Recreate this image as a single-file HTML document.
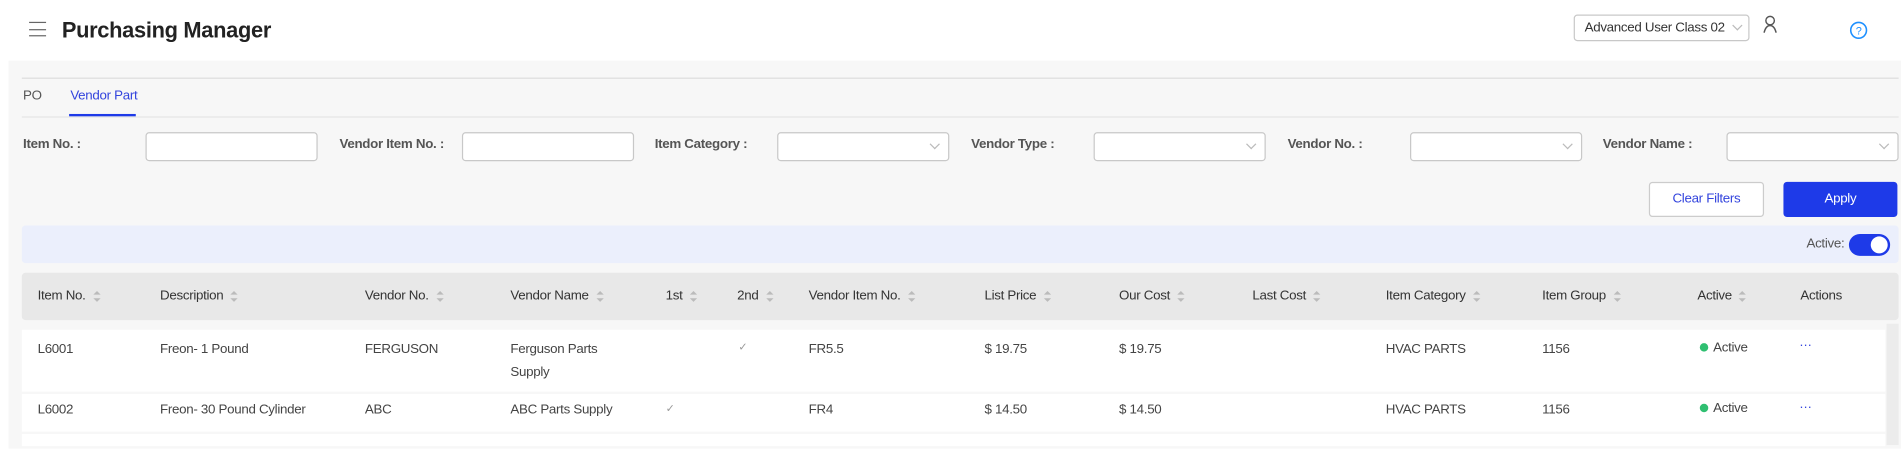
<!DOCTYPE html>
<html><head><style>
*{box-sizing:border-box;margin:0;padding:0}
html,body{width:1901px;height:442px;overflow:hidden;background:#fff}
#w{position:absolute;left:0;top:0;width:1568px;height:365px;transform:scale(1.2124);transform-origin:0 0;font-family:"Liberation Sans",sans-serif;font-size:11px;color:#333;letter-spacing:-0.25px}
.a{position:absolute}
.panel{left:7px;top:50px;width:1561px;height:320px;background:#f7f7f7}
.lbl{font-weight:bold;color:#555;font-size:11px}
.inp{height:24px;background:#fff;border:1px solid #c8c8c8;border-radius:3px}
.chev{position:absolute;right:8px;top:6px;width:6px;height:6px;border-right:1px solid #bbb;border-bottom:1px solid #bbb;transform:rotate(45deg)}
.th{top:238px;color:#333}
.s{display:inline-block;margin-left:6px;vertical-align:middle;width:6px;height:9px;position:relative}
.s:before,.s:after{content:"";position:absolute;left:0;border-left:3px solid transparent;border-right:3px solid transparent}
.s:before{top:0;border-bottom:3px solid #bbb}
.s:after{bottom:0;border-top:3px solid #bbb}
.row{left:18px;width:1537px;background:#fff}
.c{color:#444}
.ck{color:#999;font-size:9px}
.dot{display:inline-block;width:7px;height:7px;border-radius:50%;background:#2fbf71;margin-right:4px}
</style></head><body><div id="w">
<div class="a" style="left:24px;top:18px;width:14px;height:12px;border-top:1.5px solid #666;border-bottom:1.5px solid #666"></div>
<div class="a" style="left:24px;top:23.5px;width:14px;height:1.5px;background:#666"></div>
<div class="a" style="left:51px;top:15px;font-size:18px;font-weight:bold;color:#222">Purchasing Manager</div>
<div class="a inp" style="left:1298px;top:12px;width:145px;height:22px;border-radius:3px"><span class="a" style="left:8px;top:4px;color:#333">Advanced User Class 02</span><span class="chev" style="top:5px;right:6px"></span></div>
<svg class="a" style="left:1452px;top:12px" width="16" height="16" viewBox="0 0 16 16"><circle cx="8" cy="5" r="3.5" fill="none" stroke="#555" stroke-width="1.2"/><path d="M3 15c1-4 2.5-6 5-6s4 2 5 6" fill="none" stroke="#555" stroke-width="1.2"/></svg>
<svg class="a" style="left:1525px;top:17px" width="16" height="16" viewBox="0 0 16 16"><circle cx="8" cy="8" r="6.5" fill="none" stroke="#1e90ff" stroke-width="1.3"/><text x="8" y="11.5" font-size="9" text-anchor="middle" fill="#1e90ff" font-family="Liberation Sans">?</text></svg>
<div class="a panel"></div>
<div class="a" style="left:18px;top:64px;width:1548px;height:1px;background:#ddd"></div>
<div class="a" style="left:19px;top:73px;color:#555">PO</div>
<div class="a" style="left:58px;top:73px;color:#3344dd">Vendor Part</div>
<div class="a" style="left:57px;top:94px;width:55px;height:2px;background:#1e3ae8"></div>
<div class="a" style="left:18px;top:96px;width:1548px;height:1px;background:#e6e6e6"></div>
<div class="a lbl" style="left:19px;top:113px">Item No. :</div>
<div class="a inp" style="left:120px;top:109px;width:142px"></div>
<div class="a lbl" style="left:280px;top:113px">Vendor Item No. :</div>
<div class="a inp" style="left:381px;top:109px;width:142px"></div>
<div class="a lbl" style="left:540px;top:113px">Item Category :</div>
<div class="a inp" style="left:641px;top:109px;width:142px"><span class="chev"></span></div>
<div class="a lbl" style="left:801px;top:113px">Vendor Type :</div>
<div class="a inp" style="left:902px;top:109px;width:142px"><span class="chev"></span></div>
<div class="a lbl" style="left:1062px;top:113px">Vendor No. :</div>
<div class="a inp" style="left:1163px;top:109px;width:142px"><span class="chev"></span></div>
<div class="a lbl" style="left:1322px;top:113px">Vendor Name :</div>
<div class="a inp" style="left:1424px;top:109px;width:142px"><span class="chev"></span></div>
<div class="a" style="left:1360px;top:150px;width:95px;height:29px;background:#fff;border:1px solid #ccc;border-radius:3px;color:#3344dd;text-align:center;line-height:27px">Clear Filters</div>
<div class="a" style="left:1471px;top:150px;width:94px;height:29px;background:#1e3ae8;border-radius:3px;color:#fff;text-align:center;line-height:29px">Apply</div>
<div class="a" style="left:18px;top:186px;width:1548px;height:31px;background:#ebeffc;border-radius:3px"></div>
<div class="a" style="left:1490px;top:195px;color:#555">Active:</div>
<div class="a" style="left:1525px;top:193px;width:34px;height:18px;background:#1e3ae8;border-radius:9px"><div class="a" style="right:2px;top:2px;width:14px;height:14px;border-radius:50%;background:#fff"></div></div>
<div class="a" style="left:18px;top:225px;width:1548px;height:39px;background:#e8e8e8;border-radius:3px"></div>
<div class="a th" style="left:31px">Item No.<span class="s"></span></div>
<div class="a th" style="left:132px">Description<span class="s"></span></div>
<div class="a th" style="left:301px">Vendor No.<span class="s"></span></div>
<div class="a th" style="left:421px">Vendor Name<span class="s"></span></div>
<div class="a th" style="left:549px">1st<span class="s"></span></div>
<div class="a th" style="left:608px">2nd<span class="s"></span></div>
<div class="a th" style="left:667px">Vendor Item No.<span class="s"></span></div>
<div class="a th" style="left:812px">List Price<span class="s"></span></div>
<div class="a th" style="left:923px">Our Cost<span class="s"></span></div>
<div class="a th" style="left:1033px">Last Cost<span class="s"></span></div>
<div class="a th" style="left:1143px">Item Category<span class="s"></span></div>
<div class="a th" style="left:1272px">Item Group<span class="s"></span></div>
<div class="a th" style="left:1400px">Active<span class="s"></span></div>
<div class="a th" style="left:1485px">Actions</div>
<div class="a" style="left:1556px;top:267px;width:10px;height:100px;background:#ececec"></div>
<div class="a row" style="top:272px;height:51px"></div>
<div class="a row" style="top:325px;height:31px"></div>
<div class="a row" style="top:358px;height:10px"></div>
<div class="a c" style="left:31px;top:282px">L6001</div>
<div class="a c" style="left:132px;top:282px">Freon- 1 Pound</div>
<div class="a c" style="left:301px;top:282px">FERGUSON</div>
<div class="a c" style="left:421px;line-height:19px;top:279px">Ferguson Parts<br>Supply</div>
<div class="a ck" style="left:609px;top:281px">✓</div>
<div class="a c" style="left:667px;top:282px">FR5.5</div>
<div class="a c" style="left:812px;top:282px">$ 19.75</div>
<div class="a c" style="left:923px;top:282px">$ 19.75</div>
<div class="a c" style="left:1143px;top:282px">HVAC PARTS</div>
<div class="a c" style="left:1272px;top:282px">1156</div>
<div class="a c" style="left:1402px;top:281px"><span class="dot"></span>Active</div>
<div class="a" style="left:1484px;top:279px;color:#3344dd">···</div>
<div class="a c" style="left:31px;top:332px">L6002</div>
<div class="a c" style="left:132px;top:332px">Freon- 30 Pound Cylinder</div>
<div class="a c" style="left:301px;top:332px">ABC</div>
<div class="a c" style="left:421px;top:332px">ABC Parts Supply</div>
<div class="a ck" style="left:549px;top:332px">✓</div>
<div class="a c" style="left:667px;top:332px">FR4</div>
<div class="a c" style="left:812px;top:332px">$ 14.50</div>
<div class="a c" style="left:923px;top:332px">$ 14.50</div>
<div class="a c" style="left:1143px;top:332px">HVAC PARTS</div>
<div class="a c" style="left:1272px;top:332px">1156</div>
<div class="a c" style="left:1402px;top:331px"><span class="dot"></span>Active</div>
<div class="a" style="left:1484px;top:330px;color:#3344dd">···</div>
</div></body></html>
